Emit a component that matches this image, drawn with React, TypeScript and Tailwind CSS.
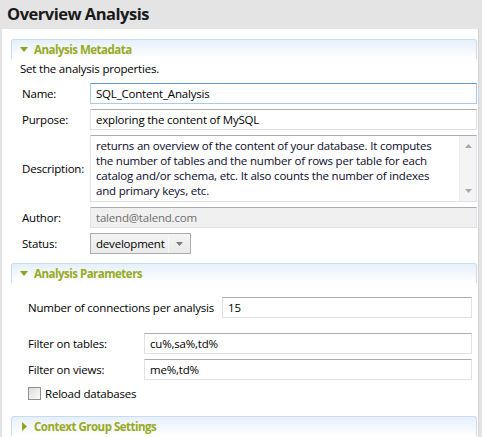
import React from "react";

const font = { fontFamily: '"Open Sans", "Noto Sans", Arial, sans-serif' };

function SectionHeader({ title, open = true }: { title: string; open?: boolean }) {
  return (
    <div className="h-[20px] flex items-center border-t border-x border-[#c9dbf0] rounded-t-[3px] bg-gradient-to-b from-[#e6f0fb] to-white pl-[8px]">
      {open ? (
        <svg width="8" height="6" viewBox="0 0 8 6" className="mr-[6px]">
          <polygon points="0,0 8,0 4,5" fill="#8ea31b" />
        </svg>
      ) : (
        <svg width="6" height="9" viewBox="0 0 6 9" className="ml-[2px] mr-[6px]">
          <polygon points="0,0 5,4.5 0,9" fill="#8ea31b" />
        </svg>
      )}
      <span className="text-[11.5px] font-bold tracking-[-0.5px] text-[#98aa1f] leading-none">{title}</span>
    </div>
  );
}

function TextBox({ value, focused, disabled, className = "" }: { value: string; focused?: boolean; disabled?: boolean; className?: string }) {
  const border = focused
    ? "border border-[#a9cbe9] border-t-[#5d98cf]"
    : "border border-[#dde2ea] border-t-[#acacac]";
  return (
    <div
      className={`h-[21px] flex items-center px-[5px] ${border} ${disabled ? "bg-[#f0f0f0] text-[#6d6d6d] border-[#c8c8c8] border-t-[#acacac]" : "bg-white text-black"} ${className}`}
    >
      {value}
    </div>
  );
}

export default function App() {
  return (
    <div className="w-[482px] h-[437px] overflow-hidden bg-[#e4e4e4] text-[11.5px] tracking-[-0.2px] text-black" style={font}>
      {/* Title bar */}
      <div className="h-[29px] flex items-center pl-[7px] text-[16.5px] font-bold tracking-[-0.5px] text-[#1a1a1a]">
        Overview Analysis
      </div>

      <div className="ml-[2px] w-[477px] h-[408px] bg-white pl-[9px] pr-[1px] pt-[10px] border-r border-[#d4d4d4]">
        {/* Analysis Metadata */}
        <SectionHeader title="Analysis Metadata" />
        <div className="pl-[9px] h-[20px] flex items-center">Set the analysis properties.</div>

        <div className="grid grid-cols-[68px_1fr] gap-y-[5px] items-center pl-[11px] mt-[4px]">
          <span>Name:</span>
          <TextBox value="SQL_Content_Analysis" focused />

          <span>Purpose:</span>
          <TextBox value="exploring the content of MySQL" />

          <span>Description:</span>
          <div className="h-[67px] flex border border-[#dde2ea] border-t-[#acacac] bg-white">
            <div className="flex-1 pl-[5px] pr-[10px] pt-[2px] leading-[15px] text-[#0a0a2a]">
              returns an overview of the content of your database. It computes the number of tables and the number of rows per table for each catalog and/or schema, etc. It also counts the number of indexes and primary keys, etc.
            </div>
            <div className="w-[17px] bg-[#f4f4f4] border-l border-[#ececec] flex flex-col justify-between items-center py-[8px]">
              <svg width="7" height="4" viewBox="0 0 7 4">
                <polygon points="0,4 7,4 3.5,0" fill="#a8a8a8" />
              </svg>
              <svg width="7" height="4" viewBox="0 0 7 4">
                <polygon points="0,0 7,0 3.5,4" fill="#a8a8a8" />
              </svg>
            </div>
          </div>

          <span>Author:</span>
          <TextBox value="talend@talend.com" disabled />

          <span>Status:</span>
          <div className="w-[101px] h-[21px] flex border border-[#acacac] bg-gradient-to-b from-[#f4f4f4] to-[#eaeaea]">
            <div className="flex-1 flex items-center pl-[5px]">development</div>
            <div className="w-[22px] flex items-center justify-center border-l border-[#f8f8f8]">
              <svg width="7" height="4" viewBox="0 0 7 4">
                <polygon points="0,0 7,0 3.5,4" fill="#7a7a7a" />
              </svg>
            </div>
          </div>
        </div>

        {/* Analysis Parameters */}
        <div className="mt-[9px]">
          <SectionHeader title="Analysis Parameters" />
        </div>
        <div className="pl-[17px] pr-[5px]">
          <div className="flex items-center mt-[14px]">
            <span className="w-[194px]">Number of connections per analysis</span>
            <TextBox value="15" className="flex-1" />
          </div>
          <div className="grid grid-cols-[116px_1fr] gap-y-[5px] items-center mt-[15px]">
            <span>Filter on tables:</span>
            <TextBox value="cu%,sa%,td%" />
            <span>Filter on views:</span>
            <TextBox value="me%,td%" />
          </div>
          <label className="flex items-center mt-[5px] h-[17px]">
            <span className="w-[13px] h-[13px] border border-[#8e8f8f] bg-gradient-to-br from-[#dcdcdc] to-[#fbfbfb] mr-[4px]" />
            Reload databases
          </label>
        </div>

        {/* Context Group Settings */}
        <div className="mt-[14px]">
          <SectionHeader title="Context Group Settings" open={false} />
        </div>
      </div>
    </div>
  );
}
